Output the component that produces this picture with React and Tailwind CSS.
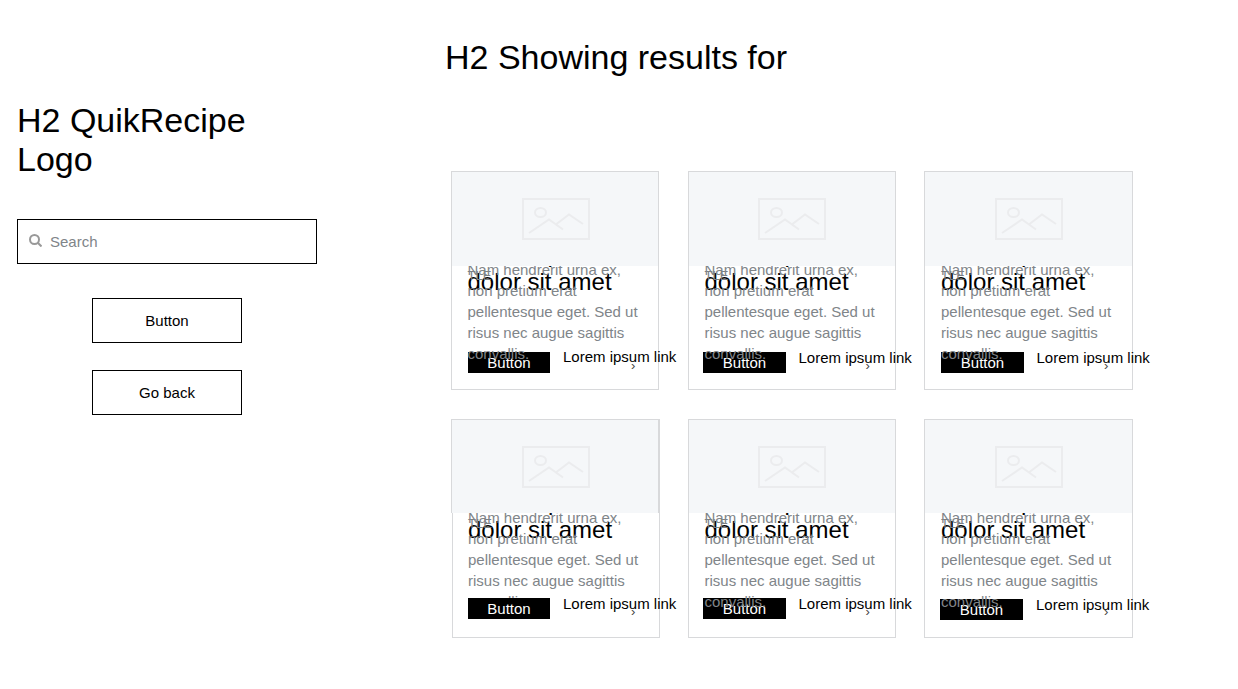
import React from 'react';

const cards = [
  { id: 1, frame: 'left-0 w-[208px]', text: 'left-[16.500px]', btn: 'left-[17px] top-[181px] w-[82px]', link: 'left-[112px] top-[175px]', arrow: 'left-[180px] top-[187px]', photo: 'h-[95px] pl-px', over: true },
  { id: 2, frame: 'left-0 w-[208px]', text: 'left-[17px]', btn: 'left-[15.500px] top-[181px] w-[83px]', link: 'left-[111px] top-[176px]', arrow: 'left-[178px] top-[187px]', photo: 'h-[95px]', over: true },
  { id: 3, frame: 'left-0 w-[209px]', text: 'left-[17px]', btn: 'left-[17px] top-[181px] w-[83px]', link: 'left-[112.500px] top-[176px]', arrow: 'left-[180px] top-[187px]', photo: 'h-[95px]', over: true },
  { id: 4, frame: 'left-px w-[208px]', text: 'left-[17px]', btn: 'left-[17px] top-[179px] w-[82px]', link: 'left-[112px] top-[174px]', arrow: 'left-[180px] top-[185px]', photo: 'h-[94px] pl-px', over: false },
  { id: 5, frame: 'left-0 w-[208px]', text: 'left-[17px]', btn: 'left-[15.500px] top-[179px] w-[83px]', link: 'left-[111px] top-[174px]', arrow: 'left-[178px] top-[185px]', photo: 'h-[94px]', over: true },
  { id: 6, frame: 'left-0 w-[209px]', text: 'left-[17px]', btn: 'left-[16px] top-[180px] w-[83px]', link: 'left-[112px] top-[175px]', arrow: 'left-[180px] top-[185px]', photo: 'h-[94px]', over: true },
];

function Placeholder() {
  return (
    <svg width="68" height="42" viewBox="0 0 68 42" fill="none" stroke="#ebecee" strokeWidth="2">
      <rect x="1" y="1" width="66" height="40" />
      <ellipse cx="18.500" cy="14.500" rx="5.500" ry="4.500" />
      <path d="M7 35 27 21.500 41 31.500M34.500 26 47 16.500 61 26" />
    </svg>
  );
}

function Card({ card }) {
  return (
    <article className="relative isolate h-[219px]">
      <div className={`absolute top-0 h-[219px] border border-[#d8d9db] bg-white ${card.frame}`} />
      <h4 className={`absolute top-[69px] w-[175px] text-[24px] leading-[28px] text-black ${card.text}`}>Lorem ipsum dolor sit amet</h4>
      <span className={`absolute top-[96px] text-[13px] leading-[18px] text-[#7b8084] ${card.text}`}>TLE</span>
      <p className={`absolute top-[88px] w-[175px] text-[15px] leading-[21px] text-[#808589] ${card.text} ${card.over ? 'z-10' : ''}`}>
        Nam hendrerit urna ex, non pretium erat pellentesque eget. Sed ut risus nec augue sagittis convallis.
      </p>
      <button className={`absolute h-[21px] bg-black text-center text-[15px] leading-[21px] text-white ${card.btn}`}>Button</button>
      <a className={`absolute whitespace-nowrap text-[15px] leading-[21px] text-black ${card.link}`}>Lorem ipsum link</a>
      <span className={`absolute text-[13px] leading-[15px] text-[#444] ${card.arrow}`}>›</span>
      <div className={`absolute left-0 top-0 z-20 flex w-full items-start justify-center border-x border-t border-[#d8d9db] bg-[#f5f7f9] pt-[26px] ${card.photo}`}>
        <Placeholder />
      </div>
    </article>
  );
}

export default function App() {
  return (
    <div className="flex h-[689px] w-[1238px] overflow-hidden bg-white font-['Liberation_Sans',sans-serif] text-black">
      <aside className="w-[445px] shrink-0 pl-[17px] pt-[101px]">
        <h2 className="w-[260px] text-[34px] leading-[39px]">H2 QuikRecipe Logo</h2>
        <div className="mt-[40px] flex h-[45px] w-[300px] items-center border border-black pl-[11px] text-[15px] text-[#808589]">
          <svg className="mr-[8px] mt-[-3px]" width="13" height="13" viewBox="0 0 13 13" fill="none" stroke="#999" strokeWidth="2">
            <circle cx="5.500" cy="5.500" r="4.500" />
            <path d="m8.800 8.800 3.700 3.700" />
          </svg>
          <span className="pt-[2px]">Search</span>
        </div>
        <div className="flex w-[300px] flex-col items-center gap-[27px] pt-[34px] text-[15px]">
          <button className="h-[45px] w-[150px] border border-black pt-[2px]">Button</button>
          <button className="h-[45px] w-[150px] border border-black pt-[2px]">Go back</button>
        </div>
      </aside>
      <main className="pt-[38px]">
        <h2 className="text-[34px] leading-[39px]">H2 Showing results for</h2>
        <section className="ml-[6px] mt-[94px] grid grid-cols-[208px_208px_209px] gap-x-[28.500px] gap-y-[29px]">
          {cards.map((card) => (
            <Card key={card.id} card={card} />
          ))}
        </section>
      </main>
    </div>
  );
}
